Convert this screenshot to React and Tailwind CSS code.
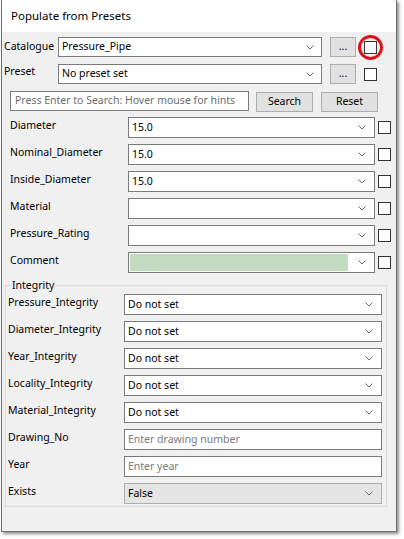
import React from 'react';

const Chevron = () => (
  <svg width="8" height="5" viewBox="0 0 8 5" className="shrink-0">
    <path d="M0.5 0.5 L4 4 L7.5 0.5" fill="none" stroke="#6a6a6a" strokeWidth="1" />
  </svg>
);

const Select = ({ value, w, fill, disabled }) => (
  <div
    className={`flex items-center h-[21px] border ${disabled ? 'border-[#adadad] bg-[#e5e5e5]' : 'border-[#7a7a7a] bg-white'} pr-[8px] ${w}`}
  >
    {fill ? (
      <div className="flex-1 self-stretch m-[1px] mr-[10px] bg-[#c2dcc2]" />
    ) : (
      <span className="flex-1 pl-[3px] text-black truncate">{value}</span>
    )}
    <Chevron />
  </div>
);

const TextBox = ({ placeholder, w }) => (
  <div className={`flex items-center h-[21px] border border-[#7a7a7a] bg-white pl-[3px] text-[#7a7a7a] ${w}`}>
    {placeholder}
  </div>
);

const Check = () => <div className="w-[13px] h-[13px] border border-[#333333] bg-white shrink-0" />;

const Btn = ({ children, w }) => (
  <div className={`flex items-center justify-center h-[20px] border border-[#adadad] bg-[#e1e1e1] ${w}`}>
    {children}
  </div>
);

const mainFields = [
  { label: 'Diameter', value: '15.0' },
  { label: 'Nominal_Diameter', value: '15.0' },
  { label: 'Inside_Diameter', value: '15.0' },
  { label: 'Material', value: '' },
  { label: 'Pressure_Rating', value: '' },
  { label: 'Comment', fill: true },
];

const integrity = ['Pressure_Integrity', 'Diameter_Integrity', 'Year_Integrity', 'Locality_Integrity', 'Material_Integrity'];

export default function App() {
  return (
    <div className="w-[404px] h-[539px] bg-white font-['Segoe_UI','Noto_Sans',sans-serif] text-[10.5px] text-black">
      <div className="ml-[1px] w-[396px] h-[532px] border border-t-0 border-[#6e6e6e] bg-[#f0f0f0] shadow-[2px_2px_3px_rgba(0,0,0,0.45)] flex flex-col">
        {/* title */}
        <div className="h-[32px] bg-white flex items-center pl-[9px] text-[11.5px]">Populate from Presets</div>

        {/* catalogue */}
        <div className="flex items-center mt-[5px] h-[20px]">
          <div className="pl-[2px] w-[56px]">Catalogue</div>
          <div className="flex items-center h-[20px] w-[264px] border border-[#7a7a7a] bg-white pl-[3px] pr-[7px]">
            <span className="flex-1">Pressure_Pipe</span>
            <Chevron />
          </div>
          <div className="ml-[8px]"><Btn w="w-[26px]">...</Btn></div>
          <div className="relative ml-[8px]">
            <Check />
            <div className="absolute left-[-6px] top-[-6px] w-[25px] h-[25px] rounded-full border-[3px] border-[#e0101a]" />
          </div>
        </div>

        {/* preset */}
        <div className="flex items-center mt-[7px] h-[20px]">
          <div className="pl-[2px] w-[56px] -mt-[4px]">Preset</div>
          <div className="flex items-center h-[20px] w-[264px] border border-[#7a7a7a] bg-white pl-[3px] pr-[7px]">
            <span className="flex-1">No preset set</span>
            <Chevron />
          </div>
          <div className="ml-[8px]"><Btn w="w-[26px]">...</Btn></div>
          <div className="ml-[8px]"><Check /></div>
        </div>

        {/* search */}
        <div className="flex items-start mt-[7px] h-[20px] ml-[8px]">
          <div className="flex items-center h-[20px] w-[239px] border border-[#7a7a7a] bg-white pl-[4px] text-[#6d6d6d]">
            Press Enter to Search: Hover mouse for hints
          </div>
          <div className="ml-[7px] mt-[1px]"><Btn w="w-[57px]">Search</Btn></div>
          <div className="ml-[8px] mt-[1px]"><Btn w="w-[57px]">Reset</Btn></div>
        </div>

        {/* main fields */}
        <div className="flex flex-col gap-[6px] mt-[6px]">
          {mainFields.map((f) => (
            <div key={f.label} className="flex items-start h-[21px]">
              <div className="w-[126px] pl-[8px] pt-[1px]">{f.label}</div>
              <Select value={f.value} fill={f.fill} w="w-[247px]" />
              <div className="ml-[3px] mt-[4px]"><Check /></div>
            </div>
          ))}
        </div>

        {/* integrity group */}
        <div className="relative ml-[3px] mt-[12px] w-[382px] border border-[#dcdcdc] pt-[8px] pb-[2px]">
          <span className="absolute left-[5px] top-[-8px] px-[1px] bg-[#f0f0f0] leading-[14px]">Integrity</span>
          <div className="flex flex-col gap-[6px]">
            {integrity.map((l) => (
              <div key={l} className="flex items-start h-[21px]">
                <div className="w-[118px] pl-[2px] pt-[1px]">{l}</div>
                <Select value="Do not set" w="w-[258px]" />
              </div>
            ))}
            <div className="flex items-start h-[21px]">
              <div className="w-[118px] pl-[2px] pt-[1px]">Drawing_No</div>
              <TextBox placeholder="Enter drawing number" w="w-[258px]" />
            </div>
            <div className="flex items-start h-[21px]">
              <div className="w-[118px] pl-[2px] pt-[1px]">Year</div>
              <TextBox placeholder="Enter year" w="w-[258px]" />
            </div>
            <div className="flex items-start h-[21px]">
              <div className="w-[118px] pl-[2px] pt-[1px]">Exists</div>
              <Select value="False" w="w-[258px]" disabled />
            </div>
          </div>
        </div>
      </div>
    </div>
  );
}
